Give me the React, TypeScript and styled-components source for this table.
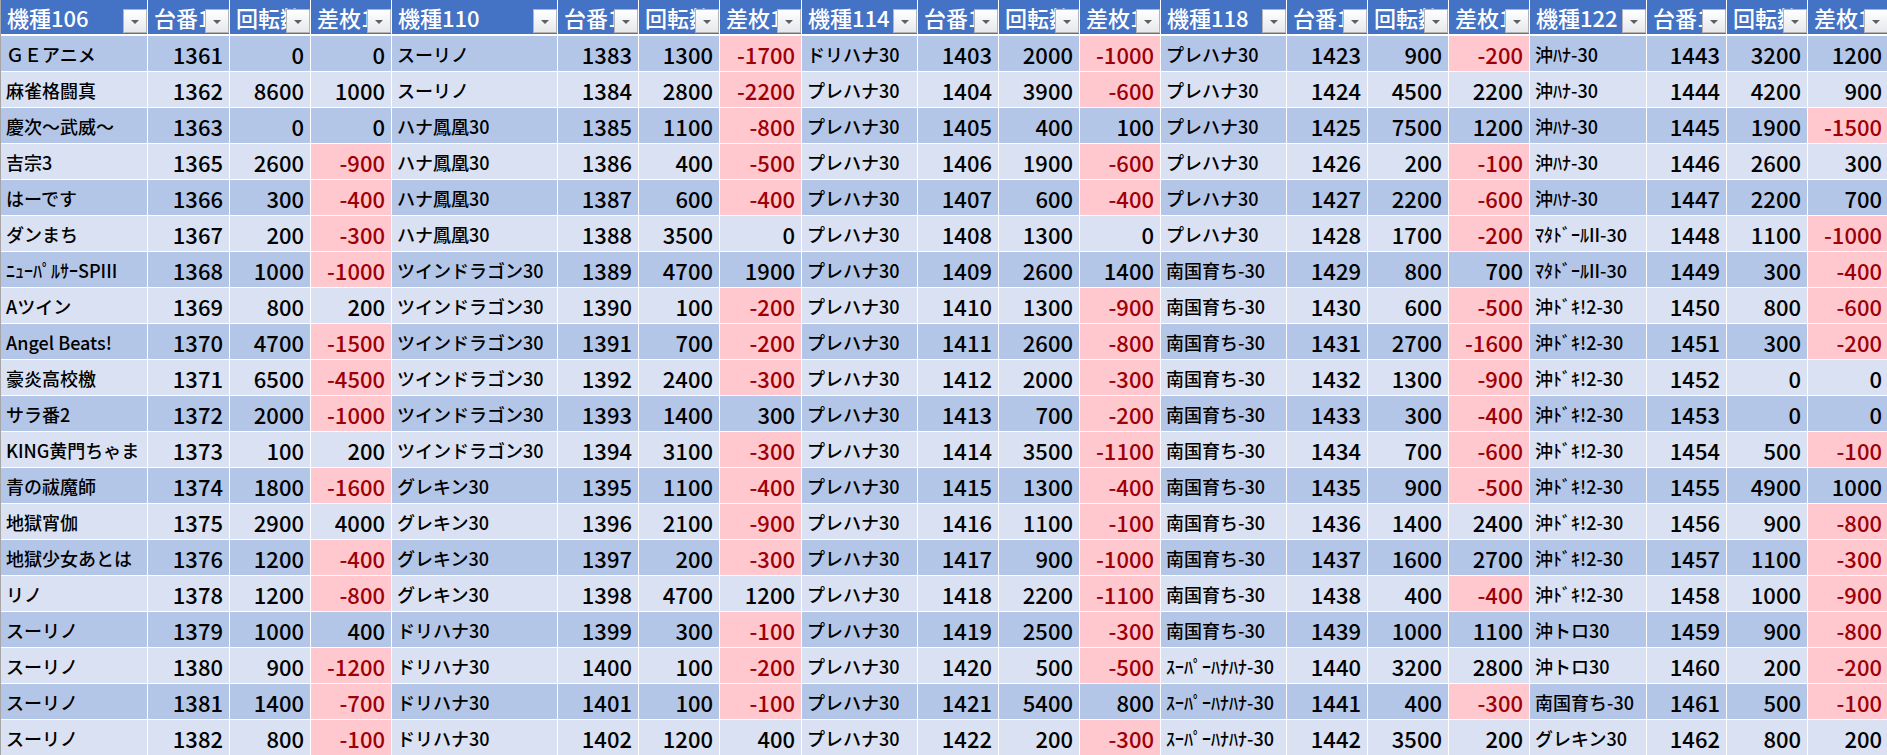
import styled, { createGlobalStyle } from 'styled-components'

type Row = [string, number, number, number]

interface Group {
  id: number
  width: number
  rows: Row[]
}

const groups: Group[] = [
  {
    id: 106,
    width: 147,
    rows: [
      ['ＧＥアニメ', 1361, 0, 0],
      ['麻雀格闘真', 1362, 8600, 1000],
      ['慶次～武威～', 1363, 0, 0],
      ['吉宗3', 1365, 2600, -900],
      ['はーです', 1366, 300, -400],
      ['ダンまち', 1367, 200, -300],
      ['ﾆｭｰﾊﾟﾙｻｰSPIII', 1368, 1000, -1000],
      ['Aツイン', 1369, 800, 200],
      ['Angel Beats!', 1370, 4700, -1500],
      ['豪炎高校檄', 1371, 6500, -4500],
      ['サラ番2', 1372, 2000, -1000],
      ['KING黄門ちゃま', 1373, 100, 200],
      ['青の祓魔師', 1374, 1800, -1600],
      ['地獄宵伽', 1375, 2900, 4000],
      ['地獄少女あとは', 1376, 1200, -400],
      ['リノ', 1378, 1200, -800],
      ['スーリノ', 1379, 1000, 400],
      ['スーリノ', 1380, 900, -1200],
      ['スーリノ', 1381, 1400, -700],
      ['スーリノ', 1382, 800, -100],
    ],
  },
  {
    id: 110,
    width: 166,
    rows: [
      ['スーリノ', 1383, 1300, -1700],
      ['スーリノ', 1384, 2800, -2200],
      ['ハナ鳳凰30', 1385, 1100, -800],
      ['ハナ鳳凰30', 1386, 400, -500],
      ['ハナ鳳凰30', 1387, 600, -400],
      ['ハナ鳳凰30', 1388, 3500, 0],
      ['ツインドラゴン30', 1389, 4700, 1900],
      ['ツインドラゴン30', 1390, 100, -200],
      ['ツインドラゴン30', 1391, 700, -200],
      ['ツインドラゴン30', 1392, 2400, -300],
      ['ツインドラゴン30', 1393, 1400, 300],
      ['ツインドラゴン30', 1394, 3100, -300],
      ['グレキン30', 1395, 1100, -400],
      ['グレキン30', 1396, 2100, -900],
      ['グレキン30', 1397, 200, -300],
      ['グレキン30', 1398, 4700, 1200],
      ['ドリハナ30', 1399, 300, -100],
      ['ドリハナ30', 1400, 100, -200],
      ['ドリハナ30', 1401, 100, -100],
      ['ドリハナ30', 1402, 1200, 400],
    ],
  },
  {
    id: 114,
    width: 116,
    rows: [
      ['ドリハナ30', 1403, 2000, -1000],
      ['プレハナ30', 1404, 3900, -600],
      ['プレハナ30', 1405, 400, 100],
      ['プレハナ30', 1406, 1900, -600],
      ['プレハナ30', 1407, 600, -400],
      ['プレハナ30', 1408, 1300, 0],
      ['プレハナ30', 1409, 2600, 1400],
      ['プレハナ30', 1410, 1300, -900],
      ['プレハナ30', 1411, 2600, -800],
      ['プレハナ30', 1412, 2000, -300],
      ['プレハナ30', 1413, 700, -200],
      ['プレハナ30', 1414, 3500, -1100],
      ['プレハナ30', 1415, 1300, -400],
      ['プレハナ30', 1416, 1100, -100],
      ['プレハナ30', 1417, 900, -1000],
      ['プレハナ30', 1418, 2200, -1100],
      ['プレハナ30', 1419, 2500, -300],
      ['プレハナ30', 1420, 500, -500],
      ['プレハナ30', 1421, 5400, 800],
      ['プレハナ30', 1422, 200, -300],
    ],
  },
  {
    id: 118,
    width: 126,
    rows: [
      ['プレハナ30', 1423, 900, -200],
      ['プレハナ30', 1424, 4500, 2200],
      ['プレハナ30', 1425, 7500, 1200],
      ['プレハナ30', 1426, 200, -100],
      ['プレハナ30', 1427, 2200, -600],
      ['プレハナ30', 1428, 1700, -200],
      ['南国育ち-30', 1429, 800, 700],
      ['南国育ち-30', 1430, 600, -500],
      ['南国育ち-30', 1431, 2700, -1600],
      ['南国育ち-30', 1432, 1300, -900],
      ['南国育ち-30', 1433, 300, -400],
      ['南国育ち-30', 1434, 700, -600],
      ['南国育ち-30', 1435, 900, -500],
      ['南国育ち-30', 1436, 1400, 2400],
      ['南国育ち-30', 1437, 1600, 2700],
      ['南国育ち-30', 1438, 400, -400],
      ['南国育ち-30', 1439, 1000, 1100],
      ['ｽｰﾊﾟｰﾊﾅﾊﾅ-30', 1440, 3200, 2800],
      ['ｽｰﾊﾟｰﾊﾅﾊﾅ-30', 1441, 400, -300],
      ['ｽｰﾊﾟｰﾊﾅﾊﾅ-30', 1442, 3500, 200],
    ],
  },
  {
    id: 122,
    width: 117,
    rows: [
      ['沖ﾊﾅ-30', 1443, 3200, 1200],
      ['沖ﾊﾅ-30', 1444, 4200, 900],
      ['沖ﾊﾅ-30', 1445, 1900, -1500],
      ['沖ﾊﾅ-30', 1446, 2600, 300],
      ['沖ﾊﾅ-30', 1447, 2200, 700],
      ['ﾏﾀﾄﾞｰﾙII-30', 1448, 1100, -1000],
      ['ﾏﾀﾄﾞｰﾙII-30', 1449, 300, -400],
      ['沖ﾄﾞｷ!2-30', 1450, 800, -600],
      ['沖ﾄﾞｷ!2-30', 1451, 300, -200],
      ['沖ﾄﾞｷ!2-30', 1452, 0, 0],
      ['沖ﾄﾞｷ!2-30', 1453, 0, 0],
      ['沖ﾄﾞｷ!2-30', 1454, 500, -100],
      ['沖ﾄﾞｷ!2-30', 1455, 4900, 1000],
      ['沖ﾄﾞｷ!2-30', 1456, 900, -800],
      ['沖ﾄﾞｷ!2-30', 1457, 1100, -300],
      ['沖ﾄﾞｷ!2-30', 1458, 1000, -900],
      ['沖トロ30', 1459, 900, -800],
      ['沖トロ30', 1460, 200, -200],
      ['南国育ち-30', 1461, 500, -100],
      ['グレキン30', 1462, 800, 200],
    ],
  },
]

// number columns are mostly 81px, a few are a pixel off in the sheet
const numWidths = [
  [82, 81, 81],
  [81, 81, 82],
  [81, 81, 81],
  [81, 81, 81],
  [80, 81, 81],
]

const columns = groups
  .flatMap((g, i) => [g.width, ...numWidths[i]])
  .map((w) => `${w}px`)
  .join(' ')

export default function App() {
  const rowCount = groups[0].rows.length

  return (
    <>
      <GlobalStyle />
      <Sheet $columns={columns}>
        {groups.flatMap((g) =>
          ['機種', '台番', '回転数', '差枚'].map((label) => (
            <HeaderCell key={`${g.id}-${label}`}>
              <HeaderText>
                {label}
                {g.id}
              </HeaderText>
              <FilterButton>
                <Arrow />
              </FilterButton>
            </HeaderCell>
          )),
        )}
        {Array.from({ length: rowCount }).flatMap((_, r) => {
          const tone = r % 2 === 0 ? 'dark' : 'light'
          return groups.flatMap((g) => {
            const [name, no, spins, diff] = g.rows[r]
            return [
              <Cell key={`${g.id}-${r}-n`} $tone={tone}>
                {name}
              </Cell>,
              <Cell key={`${g.id}-${r}-a`} $tone={tone} $num>
                {no}
              </Cell>,
              <Cell key={`${g.id}-${r}-s`} $tone={tone} $num>
                {spins}
              </Cell>,
              <Cell key={`${g.id}-${r}-d`} $tone={tone} $num $neg={diff < 0}>
                {diff}
              </Cell>,
            ]
          })
        })}
      </Sheet>
    </>
  )
}

const GlobalStyle = createGlobalStyle`
  html, body {
    margin: 0;
    padding: 0;
    background: #ffffff;
    overflow: hidden;
  }

  body {
    font-family: 'Noto Sans CJK JP', 'Noto Sans', sans-serif;
  }
`

const Sheet = styled.div<{ $columns: string }>`
  display: grid;
  grid-template-columns: ${({ $columns }) => $columns};
  grid-auto-rows: 36px;
  width: max-content;
  border-left: 1px solid #a6a6a6;
  font-weight: 500;
`

const HeaderCell = styled.div`
  position: relative;
  box-sizing: border-box;
  background: #4472c4;
  color: #ffffff;
  font-size: 22px;
  border-right: 1px solid #ffffff;
  border-bottom: 2px solid #ffffff;
  overflow: hidden;
`

const HeaderText = styled.div`
  padding-left: 6px;
  line-height: 34px;
  white-space: nowrap;
`

const FilterButton = styled.div`
  position: absolute;
  top: 9px;
  right: 0;
  width: 24px;
  height: 24px;
  box-sizing: border-box;
  border: 1px solid #b4b4b4;
  background: linear-gradient(#ffffff, #e6e8ec);
  display: flex;
  align-items: center;
  justify-content: center;
`

const Arrow = styled.span`
  width: 0;
  height: 0;
  border-left: 4px solid transparent;
  border-right: 4px solid transparent;
  border-top: 4px solid #5f5f5f;
  margin-top: 1px;
`

const tones = {
  dark: '#b4c6e7',
  light: '#d9e1f2',
}

interface CellProps {
  $tone: 'dark' | 'light'
  $num?: boolean
  $neg?: boolean
}

const Cell = styled.div<CellProps>`
  box-sizing: border-box;
  display: flex;
  align-items: center;
  justify-content: ${({ $num }) => ($num ? 'flex-end' : 'flex-start')};
  padding: ${({ $num }) => ($num ? '0 6px 0 0' : '0 0 0 5px')};
  font-size: ${({ $num }) => ($num ? '22px' : '18px')};
  background: ${({ $tone, $neg }) => ($neg ? '#ffc7ce' : tones[$tone])};
  color: ${({ $neg }) => ($neg ? '#9c0006' : '#000000')};
  border-right: 1px solid #ffffff;
  border-bottom: 1px solid #ffffff;
  white-space: nowrap;
  overflow: hidden;
`
